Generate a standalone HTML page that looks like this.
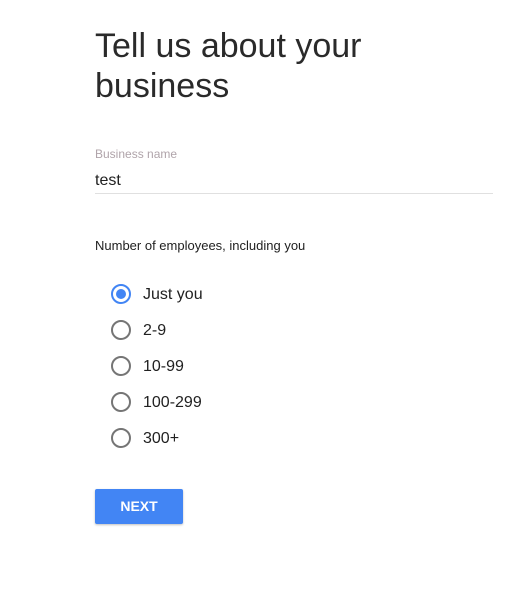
<!DOCTYPE html>
<html><head><style>
body{margin:0;width:507px;height:598px;background:#fff;font-family:"Liberation Sans",sans-serif;position:relative;overflow:hidden}
.a{position:absolute;white-space:nowrap}
h1{position:absolute;left:95px;top:26px;margin:0;font-size:34px;font-weight:normal;line-height:40px;color:#2a2a2a;letter-spacing:0px}
.r{position:absolute;left:111px;width:16px;height:16px;border:2px solid #757575;border-radius:50%}
.r.on{border-color:#4285f4}
.r.on:after{content:"";position:absolute;left:3px;top:3px;width:10px;height:10px;border-radius:50%;background:#4285f4}
.l{position:absolute;left:143px;font-size:16px;color:#212121}
</style></head><body>
<h1>Tell us about your<br>business</h1>
<div class="a" style="left:95px;top:147px;font-size:12px;color:#b0a4aa">Business name</div>
<div class="a" style="left:95px;top:172px;font-size:16px;color:#212121">test</div>
<div class="a" style="left:95px;top:193px;width:398px;height:1px;background:#e0e0e0"></div>
<div class="a" style="left:95px;top:238px;font-size:13px;color:#212121">Number of employees, including you</div>
<div class="r on" style="top:284px"></div><div class="l" style="top:286px">Just you</div>
<div class="r" style="top:320px"></div><div class="l" style="top:322px">2-9</div>
<div class="r" style="top:356px"></div><div class="l" style="top:358px">10-99</div>
<div class="r" style="top:392px"></div><div class="l" style="top:394px">100-299</div>
<div class="r" style="top:428px"></div><div class="l" style="top:430px">300+</div>
<div class="a" style="left:95px;top:489px;width:88px;height:35px;background:#4285f4;border-radius:2px;box-shadow:0 1px 2px rgba(0,0,0,.25);color:#fff;font-weight:bold;font-size:14px;line-height:35px;text-align:center">NEXT</div>
</body></html>
